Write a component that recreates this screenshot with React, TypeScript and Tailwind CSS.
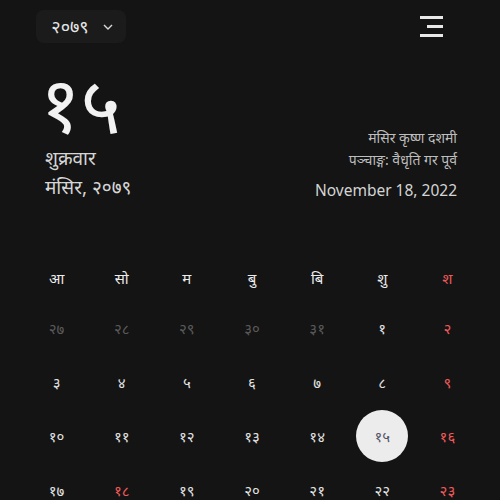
const font = "font-['Noto_Sans','Noto_Sans_Devanagari',sans-serif]";

type Day = { d: string; kind?: 'muted' | 'red' | 'today' };

const heads = ['आ', 'सो', 'म', 'बु', 'बि', 'शु', 'श'];

const weeks: Day[][] = [
  [
    { d: '२७', kind: 'muted' },
    { d: '२८', kind: 'muted' },
    { d: '२९', kind: 'muted' },
    { d: '३०', kind: 'muted' },
    { d: '३१', kind: 'muted' },
    { d: '१' },
    { d: '२', kind: 'red' },
  ],
  [{ d: '३' }, { d: '४' }, { d: '५' }, { d: '६' }, { d: '७' }, { d: '८' }, { d: '९', kind: 'red' }],
  [{ d: '१०' }, { d: '११' }, { d: '१२' }, { d: '१३' }, { d: '१४' }, { d: '१५', kind: 'today' }, { d: '१६', kind: 'red' }],
  [{ d: '१७' }, { d: '१८', kind: 'red' }, { d: '१९' }, { d: '२०' }, { d: '२१' }, { d: '२२' }, { d: '२३', kind: 'red' }],
];

function TopBar() {
  return (
    <div className="flex items-center justify-between pl-[36px] pr-[57px] pt-[10px]">
      <button className="flex h-[33px] w-[90px] items-center justify-center gap-[14px] rounded-lg bg-[#1b1b1b] pl-[2px] text-[18px] text-[#e6e6e6]">
        <span>२०७९</span>
        <svg width="10" height="6" viewBox="0 0 10 6" fill="none" stroke="#d8d8d8" strokeWidth="1.4">
          <path d="M1 1l4 4 4-4" />
        </svg>
      </button>
      <div className="flex w-[23px] flex-col items-end gap-[6px]">
        <span className="h-[3px] w-[23px] bg-[#e8e8e8]" />
        <span className="h-[3px] w-[16px] bg-[#e8e8e8]" />
        <span className="h-[3px] w-[23px] bg-[#e8e8e8]" />
      </div>
    </div>
  );
}

function Summary() {
  return (
    <div className="flex items-end justify-between pl-[45px] pr-[43px] pt-[18px]">
      <div className="flex flex-col">
        <div className="-ml-[5px] text-[78px] leading-[84px] text-[#f2f2f2]">१५</div>
        <div className="text-[19px] leading-[26px] text-[#d6d6d6]">शुक्रवार</div>
        <div className="text-[19px] leading-[32px] text-[#d6d6d6]">मंसिर, २०७९</div>
      </div>
      <div className="flex flex-col items-end pb-[1px]">
        <div className="text-[14px] leading-[22px] text-[#bdbdbd]">मंसिर कृष्ण दशमी</div>
        <div className="text-[14px] leading-[22px] text-[#bdbdbd]">पञ्चाङ्ग: वैधृति गर पूर्व</div>
        <div className="mt-[7px] text-[15.5px] leading-[24px] text-[#d4d4d4]">November 18, 2022</div>
      </div>
    </div>
  );
}

function dayColor(kind?: Day['kind']) {
  if (kind === 'muted') return 'text-[#5a5a5a]';
  if (kind === 'red') return 'text-[#f05a5a]';
  return 'text-[#e2e2e2]';
}

function Calendar() {
  return (
    <div className="ml-[24px] mt-[52px] grid w-[456px] grid-cols-7">
      {heads.map((h, i) => (
        <div
          key={h}
          className={`flex h-[46px] items-center justify-center text-[15px] ${i === 6 ? 'text-[#f05a5a]' : 'text-[#ececec]'}`}
        >
          {h}
        </div>
      ))}
      {weeks.flat().map((day, i) => (
        <div key={i} className="flex h-[54px] items-center justify-center">
          {day.kind === 'today' ? (
            <span className="flex h-[52px] w-[52px] items-center justify-center rounded-full bg-[#ececec] text-[15px] text-[#55556a]">
              {day.d}
            </span>
          ) : (
            <span className={`text-[15px] ${dayColor(day.kind)}`}>{day.d}</span>
          )}
        </div>
      ))}
    </div>
  );
}

export default function App() {
  return (
    <main className={`h-[500px] w-[500px] overflow-hidden bg-[#141414] ${font}`}>
      <TopBar />
      <Summary />
      <Calendar />
    </main>
  );
}
